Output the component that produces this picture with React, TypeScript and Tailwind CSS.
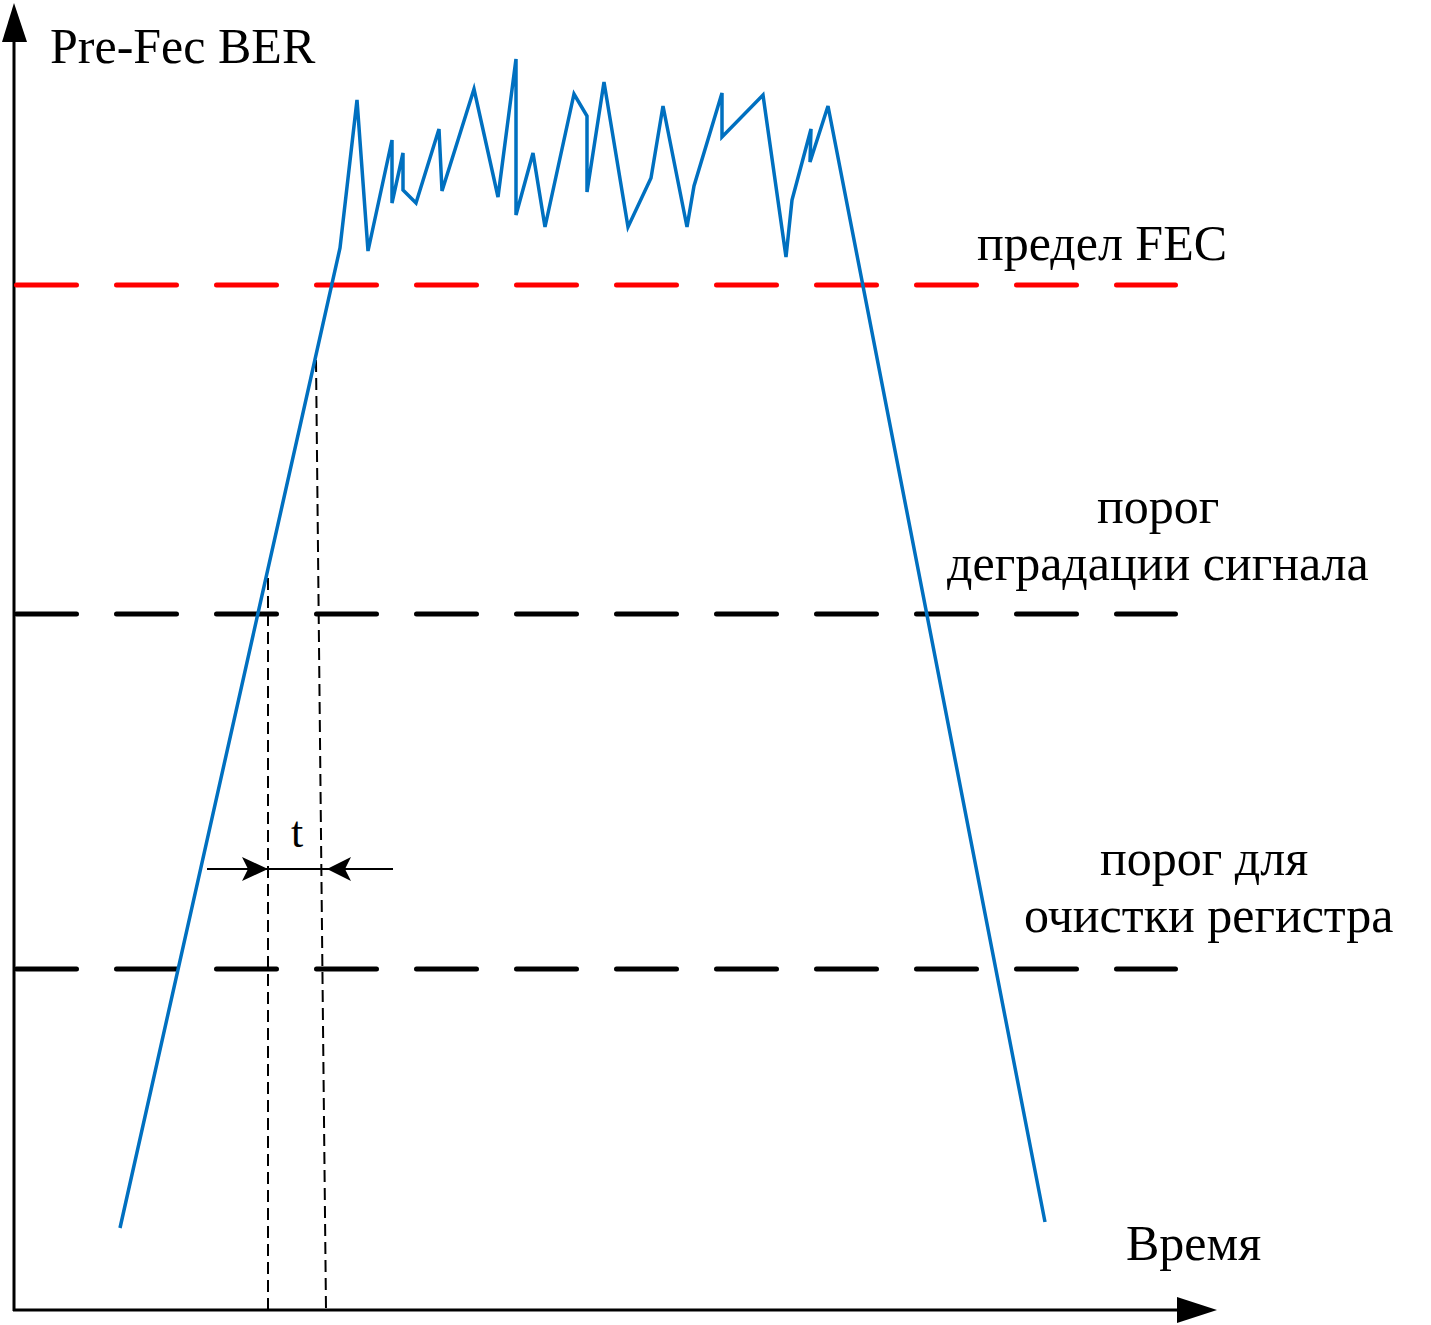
import * as React from "react";

const BLUE = "#0070c0";

// Pre-FEC BER trace: rise, noisy plateau above the FEC limit, fall.
const TRACE: [number, number][] = [
  [120, 1228],
  [340, 248],
  [357, 100],
  [368, 251],
  [392, 140],
  [392, 203],
  [403, 153],
  [403, 190],
  [416, 203],
  [439, 129],
  [442, 191],
  [474, 89],
  [498, 197],
  [516, 59],
  [516, 215],
  [533, 153],
  [545, 227],
  [574, 94],
  [587, 116],
  [587, 192],
  [604, 82],
  [628, 227],
  [651, 178],
  [663, 106],
  [687, 227],
  [694, 186],
  [722, 93],
  [722, 137],
  [763, 95],
  [786, 257],
  [792, 200],
  [811, 129],
  [810, 162],
  [828, 106],
  [1045, 1222],
];

interface Label {
  x: number;
  y: number;
  text: string;
  size?: number;
}

const LABELS: Label[] = [
  { x: 50, y: 63, text: "Pre-Fec BER" },
  { x: 977, y: 260, text: "предел FEC" },
  { x: 1097, y: 523, text: "порог" },
  { x: 947, y: 580, text: "деградации сигнала" },
  { x: 1100, y: 875, text: "порог для" },
  { x: 1024, y: 932, text: "очистки регистра" },
  { x: 1126, y: 1260, text: "Время" },
  { x: 291, y: 847, text: "t", size: 44 },
];

const THRESHOLDS = [
  { y: 285, color: "#ff0000" },
  { y: 614, color: "#000000" },
  { y: 969, color: "#000000" },
];

export default function App() {
  return (
    <div className="h-[1325px] w-[1431px] overflow-hidden bg-white">
      <svg width={1431} height={1325} viewBox="0 0 1431 1325" className="block">
        {/* axes */}
        <line x1={14} y1={36} x2={14} y2={1311} stroke="#000" strokeWidth={3} />
        <polygon points="14,3 2,42 27,42" fill="#000" />
        <line x1={13} y1={1310} x2={1182} y2={1310} stroke="#000" strokeWidth={3} />
        <polygon points="1217,1310 1177,1297 1177,1323" fill="#000" />

        {/* threshold lines */}
        {THRESHOLDS.map((t) => (
          <line
            key={t.y}
            x1={16.5}
            y1={t.y}
            x2={1175.5}
            y2={t.y}
            stroke={t.color}
            strokeWidth={5}
            strokeDasharray="60 40"
            strokeLinecap="round"
          />
        ))}

        {/* projection lines */}
        <line x1={268} y1={578} x2={268} y2={1310} stroke="#000" strokeWidth={2} strokeDasharray="12 6" />
        <line x1={316} y1={360} x2={326} y2={1310} stroke="#000" strokeWidth={2} strokeDasharray="12 6" />

        {/* t interval arrows */}
        <line x1={207} y1={869} x2={393} y2={869} stroke="#000" strokeWidth={2} />
        <polygon points="268,869 242,857 248,869 242,881" fill="#000" />
        <polygon points="327,869 351,857 345,869 351,881" fill="#000" />

        {/* trace */}
        <polyline
          points={TRACE.map((p) => p.join(",")).join(" ")}
          fill="none"
          stroke={BLUE}
          strokeWidth={3.5}
          strokeLinejoin="miter"
          strokeMiterlimit={4}
        />

        {LABELS.map((l) => (
          <text
            key={l.text}
            x={l.x}
            y={l.y}
            fontSize={l.size ?? 50}
            fontFamily="'Liberation Serif', 'Times New Roman', serif"
            fill="#000"
          >
            {l.text}
          </text>
        ))}
      </svg>
    </div>
  );
}
